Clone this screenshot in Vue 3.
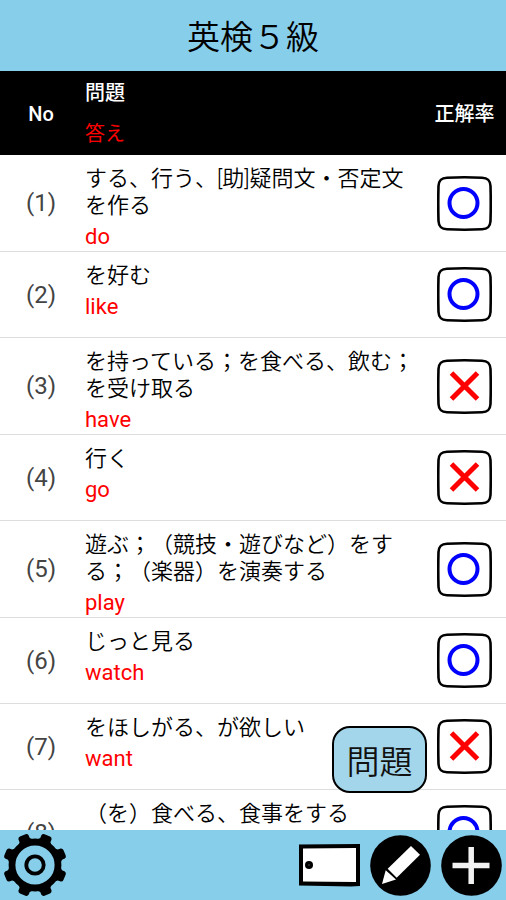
<script setup>
import { ref } from 'vue';

const title = '英検５級';

const words = ref([
    { no: 1, question: 'する、行う、[助]疑問文・否定文\nを作る', answer: 'do', correct: true },
    { no: 2, question: 'を好む', answer: 'like', correct: true },
    { no: 3, question: 'を持っている；を食べる、飲む；\nを受け取る', answer: 'have', correct: false },
    { no: 4, question: '行く', answer: 'go', correct: false },
    { no: 5, question: '遊ぶ；（競技・遊びなど）をす\nる；（楽器）を演奏する', answer: 'play', correct: true },
    { no: 6, question: 'じっと見る', answer: 'watch', correct: true },
    { no: 7, question: 'をほしがる、が欲しい', answer: 'want', correct: false },
    { no: 8, question: '（を）食べる、食事をする', answer: 'eat', correct: true },
]);

// Rotation of each gear tooth in degrees
const teeth = [22.5, 67.5, 112.5, 157.5, 202.5, 247.5, 292.5, 337.5];
</script>

<template>
    <div class="app">
        <header class="title-bar">
            <h1>{{ title }}</h1>
        </header>

        <main class="content">
            <div class="list">
                <table>
                    <thead>
                        <tr>
                            <th class="col-no" scope="col">No</th>
                            <th class="col-word" scope="col">
                                <div>問題</div>
                                <div class="answer-label">答え</div>
                            </th>
                            <th class="col-mark" scope="col">正解率</th>
                        </tr>
                    </thead>
                    <tbody>
                        <tr v-for="word in words" :key="word.no">
                            <td class="col-no">({{ word.no }})</td>
                            <td class="col-word">
                                <div class="question">{{ word.question }}</div>
                                <div class="answer">{{ word.answer }}</div>
                            </td>
                            <td class="col-mark">
                                <svg class="mark" viewBox="0 0 55 55" role="img">
                                    <path
                                        d="M10 1.7Q27.5 .9 45 1.7C51 2 53.2 4.500 53.5 10Q54 27.5 53.5 45C53.2 50.5 51 53 45 53.3Q27.5 54.1 10 53.3C4 53 1.8 50.5 1.5 45Q1 27.5 1.5 10C1.8 4.5 4 2 10 1.7Z"
                                        fill="#fff"
                                        stroke="#000"
                                        stroke-width="2.6"
                                    />
                                    <circle v-if="word.correct" cx="26.5" cy="27" r="14" fill="none" stroke="#00f" stroke-width="4" />
                                    <path v-else d="M14.5 14L40.5 40M40.5 14L14.5 40" fill="none" stroke="#f00" stroke-width="5" />
                                </svg>
                            </td>
                        </tr>
                    </tbody>
                </table>
            </div>
            <button class="quiz-button" type="button">問題</button>
        </main>

        <footer class="toolbar">
            <button class="icon-button settings" type="button" aria-label="設定">
                <svg width="62" height="62" viewBox="-31 -31 62 62">
                    <path
                        v-for="angle in teeth"
                        :key="angle"
                        :transform="`rotate(${angle})`"
                        d="M-9 -23L-5.5 -27V-30Q-5 -32 -3 -32H3Q5 -32 5.5 -30V-27L9 -23Z"
                    />
                    <circle r="23" fill="none" stroke="#000" stroke-width="6.8" />
                    <circle r="8.7" fill="none" stroke="#000" stroke-width="3.8" />
                </svg>
            </button>
            <button class="icon-button" type="button" aria-label="カード">
                <svg width="61" height="61" viewBox="0 0 61 61">
                    <path d="M0 9.5L61 9V51L52 51.5L0 50.5Z" />
                    <path d="M4 13.5L57 13V47L4 46.5Z" fill="#fff" />
                    <circle cx="10" cy="30" r="4" />
                    <circle cx="10" cy="30" r="1" fill="#333" />
                </svg>
            </button>
            <button class="icon-button" type="button" aria-label="編集">
                <svg width="61" height="61" viewBox="0 0 61 61">
                    <circle cx="30.5" cy="30.5" r="30.3" />
                    <path d="M41 11L50 19.7L26.7 42.7L17.7 33.7Z" fill="#fff" />
                    <path d="M15.7 35.3L26 44.6L12 49Z" fill="#fff" />
                </svg>
            </button>
            <button class="icon-button" type="button" aria-label="追加">
                <svg width="61" height="61" viewBox="0 0 61 61">
                    <circle cx="30.5" cy="30.5" r="30.3" />
                    <path d="M11.5 30.5H48.5M30.2 12V49" fill="none" stroke="#f2f2f2" stroke-width="5.5" />
                </svg>
            </button>
        </footer>
    </div>
</template>

<style>
body {
    margin: 0;
}
</style>

<style scoped>
.app {
    display: flex;
    flex-direction: column;
    height: 100vh;
    background: #fff;
    color: #000;
    font-family: Roboto, "Noto Sans CJK JP", sans-serif;
    text-spacing-trim: space-all;
}

.title-bar {
    display: flex;
    align-items: center;
    justify-content: center;
    flex: none;
    box-sizing: border-box;
    height: 71px;
    padding-top: 4px;
    background: #87ceeb;
}

.title-bar h1 {
    margin: 0;
    font-size: 33px;
    font-weight: 350;
    line-height: 40px;
}

.content {
    position: relative;
    flex: 1;
    min-height: 0;
}

.list {
    height: 100%;
    overflow-y: auto;
    scrollbar-width: none;
}

table {
    width: 100%;
    table-layout: fixed;
    border-spacing: 0;
}

th,
td {
    box-sizing: border-box;
    padding: 0;
}

th {
    position: sticky;
    top: 0;
    height: 84px;
    padding-top: 2px;
    background: #000;
    color: #fff;
    font-size: 20px;
    font-weight: 500;
    line-height: 41px;
}

td {
    height: 86px;
    border-bottom: 1px solid #ddd;
}

.col-no {
    width: 82px;
    text-align: center;
}

td.col-no {
    color: #444;
    font-size: 24px;
}

.col-word {
    padding-left: 3px;
    text-align: left;
}

td.col-word {
    padding-top: 10px;
    font-size: 22px;
    line-height: 27px;
    vertical-align: top;
}

.col-mark {
    width: 83px;
    text-align: center;
}

.question {
    font-weight: 350;
    white-space: pre-line;
}

.answer {
    padding: 4px 0 1px;
    color: #f00;
}

.answer-label {
    color: #f00;
    font-weight: 400;
}

.mark {
    display: block;
    width: 55px;
    height: 55px;
    margin: 0 auto;
}

.quiz-button {
    position: absolute;
    right: 79px;
    bottom: 37px;
    width: 95px;
    height: 67px;
    padding: 0;
    border: 2px solid #000;
    border-radius: 18px;
    background: #a3d6ea;
    color: #111;
    font-family: inherit;
    font-size: 33px;
    font-weight: 350;
}

.toolbar {
    display: flex;
    align-items: center;
    flex: none;
    gap: 10px;
    height: 70px;
    padding: 0 4px;
    background: #87ceeb;
}

.icon-button {
    padding: 0;
    border: 0;
    background: none;
}

.icon-button svg {
    display: block;
    overflow: visible;
}

.settings {
    margin-right: auto;
}
</style>
